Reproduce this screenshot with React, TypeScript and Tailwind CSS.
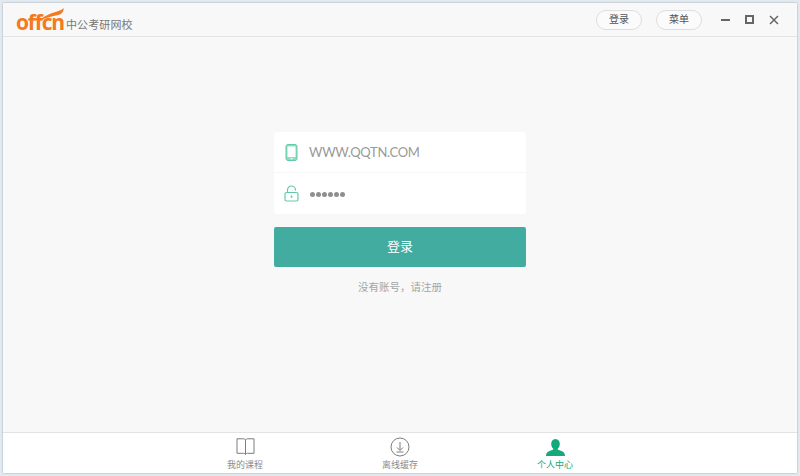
import { ReactNode } from 'react'

const CJK = 'font-["Liberation_Sans","Noto_Sans_CJK_SC",sans-serif]'

function PhoneIcon() {
  return (
    <svg width="14" height="17" viewBox="0 0 14 17" fill="none">
      <rect x="1" y="0.5" width="11" height="16" rx="2" fill="#8fdcc3" stroke="#62c9a8" />
      <rect x="2.5" y="2.5" width="8" height="10.5" fill="#fff" />
      <rect x="5.5" y="14.2" width="2" height="1" fill="#fff" />
    </svg>
  )
}

function LockIcon() {
  return (
    <svg width="16" height="17" viewBox="0 0 16 17" fill="none" stroke="#62c9a8" strokeWidth="1.2">
      <rect x="1" y="7.5" width="13" height="8.5" rx="1.5" />
      <path d="M3.5 7.5V5a4 4 0 0 1 8 0v.5" />
      <path d="M7.5 10.5v2.2" strokeWidth="1.6" />
    </svg>
  )
}

function BookIcon() {
  return (
    <svg width="19" height="18" viewBox="0 0 19 18" fill="none" stroke="#7d7d7d" strokeWidth="1">
      <path d="M1 .8h6.500c1 0 2 .5 2 1.700 0-1.200 1-1.700 2-1.700H18v14.500h-6.500c-1 0-2 .3-2 1.200 0-.9-1-1.200-2-1.200H1z" />
      <path d="M9.500 2.500v14" />
    </svg>
  )
}

function DownloadIcon() {
  return (
    <svg width="20" height="20" viewBox="0 0 20 20" fill="none" stroke="#7d7d7d" strokeWidth="1">
      <circle cx="10" cy="10" r="9" />
      <path d="M10 5v8M7 10.500l3 3 3-3M6.500 15h7" />
    </svg>
  )
}

function PersonIcon() {
  return (
    <svg width="19" height="17" viewBox="0 0 19 17" fill="#13a97b">
      <path d="M9.500 0c2.800 0 4.300 2.200 4.300 5 0 2.200-1 4-2.300 5 .5 1 3 1.500 5 2.500 1.600.8 2.500 2.200 2.500 4.500H0c0-2.300.9-3.700 2.500-4.500 2-1 4.500-1.500 5-2.500-1.300-1-2.300-2.800-2.300-5 0-2.800 1.500-5 4.300-5z" />
    </svg>
  )
}

function NavItem({ icon, label, active }: { icon: ReactNode; label: string; active?: boolean }) {
  return (
    <div className="flex w-[155px] flex-col items-center">
      <div className="flex h-[20px] items-center">{icon}</div>
      <span className={`mt-[1px] text-[9px] leading-[14px] ${active ? 'text-[#13a97b]' : 'text-[#8a8a8a]'}`}>{label}</span>
    </div>
  )
}

export default function App() {
  return (
    <div className={`h-[476px] w-[800px] overflow-hidden bg-[#e4eaef] p-[3px] ${CJK}`}>
      <div className="flex h-[470px] w-[794px] flex-col bg-[#f8f8f8] shadow-[0_0_2px_#9aa8b4]">
        {/* Title bar */}
        <div className="flex h-[34px] flex-none items-center justify-between border-b border-[#e3e3e3]">
          <div className="relative flex items-center pl-[13px] pt-[5px]">
            <span className='w-[47px] text-[21px] leading-[24px] font-bold tracking-[-1.2px] text-[#f47a20] font-["Open_Sans",sans-serif]'>offcn</span>
            <svg className="absolute top-[3px] left-[35px]" width="26" height="15" viewBox="0 0 26 15" fill="#f47a20">
              <path d="M0 14.500C5 8 13 5 19 3.500 22 2.700 24.500 1.500 25.500 0c.5 3-1 5.500-5 7C14 8.500 6 9.500 0 14.500z" />
            </svg>
            <span className="ml-[3px] mt-[5px] text-[11px] tracking-[0.1px] leading-[14px] text-[#777]">中公考研网校</span>
          </div>
          <div className="flex items-center">
            <button className="h-[20px] w-[46px] rounded-full border border-[#dedede] bg-[#fbfbfb] text-[10px] text-[#555]">登录</button>
            <button className="ml-[14px] h-[20px] w-[46px] rounded-full border border-[#dedede] bg-[#fbfbfb] text-[10px] text-[#555]">菜单</button>
            <div className="ml-[19px] h-[2px] w-[9px] bg-[#666]" />
            <div className="ml-[15px] h-[9px] w-[9px] border-2 border-[#666]" />
            <svg className="ml-[15px] mr-[18px]" width="10" height="10" viewBox="0 0 10 10" stroke="#666" strokeWidth="1.500">
              <path d="M1 1l8 8M9 1l-8 8" />
            </svg>
          </div>
        </div>

        {/* Login form */}
        <div className="flex flex-1 flex-col items-center pt-[95px]">
          <div className="w-[252px] overflow-hidden rounded-[3px] bg-white">
            <div className="flex h-[41px] items-center border-b border-[#f6f6f6] pl-[11px]">
              <PhoneIcon />
              <span className='ml-[10px] mt-[1px] text-[13px] tracking-[-0.3px] text-[#9a9a9a] font-["Lato",sans-serif]'>WWW.QQTN.COM</span>
            </div>
            <div className="flex h-[41px] items-center pl-[10px]">
              <LockIcon />
              <div className="ml-[10px] mt-[1px] flex gap-[1px]">
                {[0, 1, 2, 3, 4, 5].map((i) => (
                  <span key={i} className="h-[5px] w-[5px] rounded-full bg-[#8f8f8f]" />
                ))}
              </div>
            </div>
          </div>
          <button className="mt-[13px] h-[40px] w-[252px] rounded-[2px] bg-[#43aca1] text-[13px] text-white">登录</button>
          <div className="mt-[13px] text-[10.5px] leading-[14px] text-[#a5a5a5]">没有账号，请注册</div>
        </div>

        {/* Bottom nav */}
        <div className="flex h-[41px] flex-none items-start justify-center border-t border-[#e3e3e3] bg-white pt-[4px]">
          <NavItem icon={<BookIcon />} label="我的课程" />
          <NavItem icon={<DownloadIcon />} label="离线缓存" />
          <NavItem icon={<PersonIcon />} label="个人中心" active />
        </div>
      </div>
    </div>
  )
}
